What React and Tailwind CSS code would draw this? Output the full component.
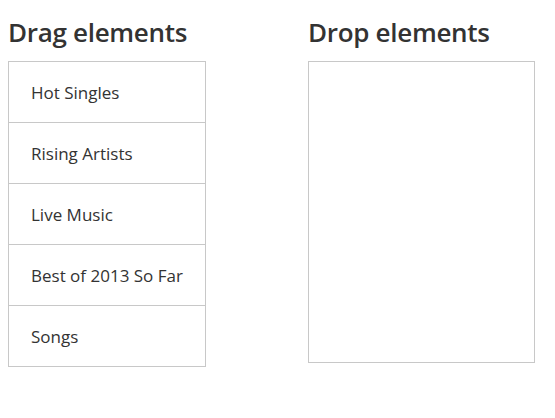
export default function App() {
  const items = ["Hot Singles", "Rising Artists", "Live Music", "Best of 2013 So Far", "Songs"];
  return (
    <div className="bg-white w-[555px] h-[418px] text-[#333] flex gap-[102px] pl-[8px]" style={{ fontFamily: '"Open Sans", "Noto Sans", sans-serif' }}>
      <div className="flex flex-col w-[198px]">
        <h2 className="text-[26px] font-[560] leading-[30px] mt-[17px] mb-[14px] tracking-[-0.3px]">Drag elements</h2>
        <div className="border border-[#c8c8c8]">
          {items.map((t, i) => (
            <div key={t} className={`flex items-center pl-[22px] pt-[2px] text-[17px] ${i < items.length - 1 ? "h-[61px] border-b border-[#c8c8c8]" : "h-[60px]"}`}>
              {t}
            </div>
          ))}
        </div>
      </div>
      <div className="flex flex-col w-[227px]">
        <h2 className="text-[26px] font-[560] leading-[30px] mt-[17px] mb-[14px] tracking-[-0.3px]">Drop elements</h2>
        <div className="border border-[#c8c8c8] h-[302px]"></div>
      </div>
    </div>
  );
}
